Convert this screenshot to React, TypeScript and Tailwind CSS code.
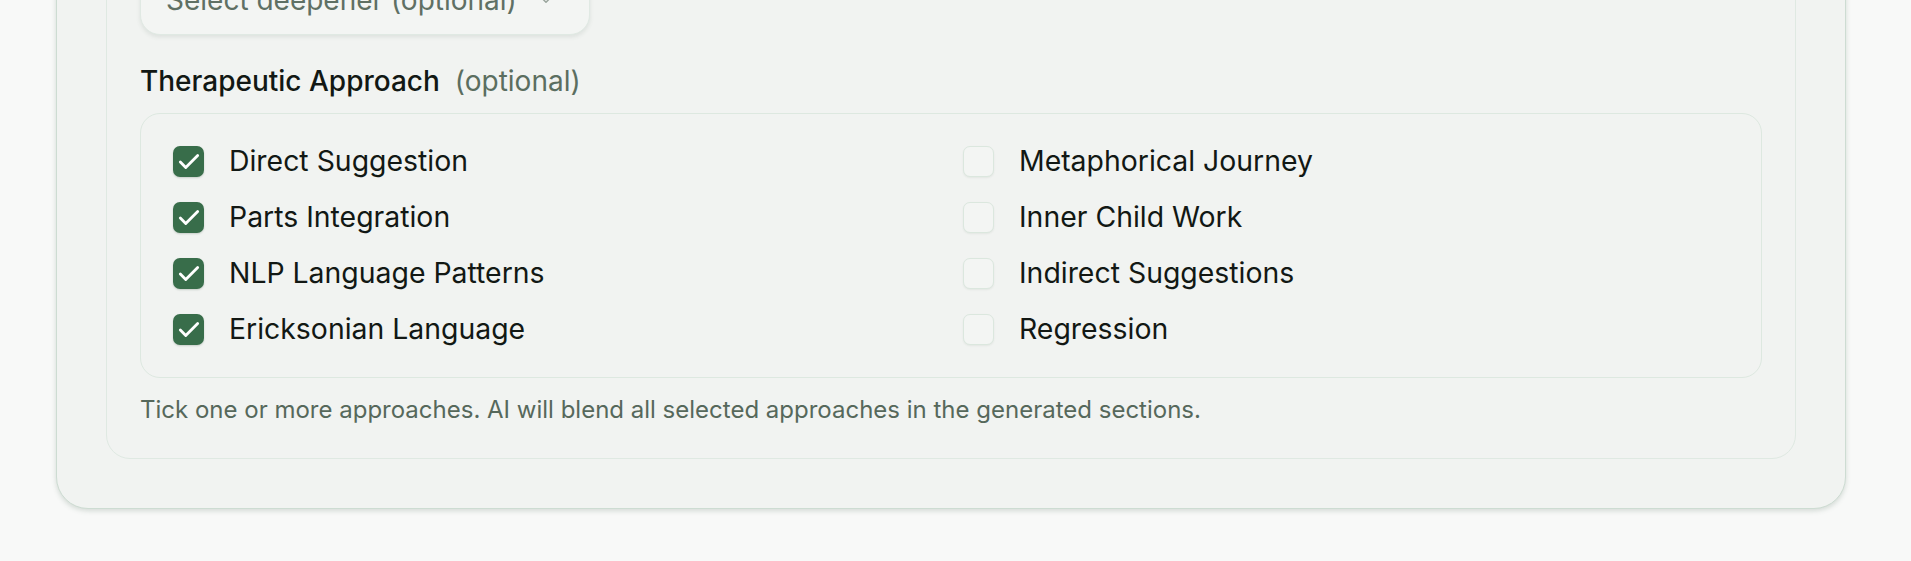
import { Check, ChevronDown } from "lucide-react";

const left = ["Direct Suggestion", "Parts Integration", "NLP Language Patterns", "Ericksonian Language"];
const right = ["Metaphorical Journey", "Inner Child Work", "Indirect Suggestions", "Regression"];

function Item({ label, checked }: { label: string; checked: boolean }) {
  return (
    <label className="flex items-center gap-[25px] h-[31px]">
      {checked ? (
        <span className="w-[31px] h-[31px] rounded-[7px] bg-[#386d4a] flex items-center justify-center shadow-[0_1px_2px_rgba(30,60,40,0.2)]">
          <Check size={26} strokeWidth={2.6} className="text-white" />
        </span>
      ) : (
        <span className="w-[31px] h-[31px] rounded-[7px] border-[1.5px] border-[#dbe7de] bg-[#f3f5f3] shadow-[0_1px_2px_rgba(60,90,70,0.08)]" />
      )}
      <span className="text-[28.4px] leading-none text-[#121814]">{label}</span>
    </label>
  );
}

export default function App() {
  return (
    <div className="h-[561px] overflow-hidden bg-[#f8f9f8]" style={{ fontFamily: "Inter, 'Noto Sans', sans-serif" }}>
      {/* Card */}
      <div className="ml-[56px] w-[1790px] -mt-[120px] rounded-[32px] border border-[#cddcd2] bg-[#f1f3f1] px-[49px] pt-[40px] pb-[49px] shadow-[0_2px_5px_rgba(70,100,80,0.2)]">
        {/* Section */}
        <div className="rounded-[24px] border border-[#dfe9e2] px-[33px] pt-[43px] pb-[31px]">
          {/* Select */}
          <div className="w-[450px] h-[70px] rounded-[20px] border border-[#e0e9e3] bg-[#f3f5f3] shadow-[0_2px_4px_rgba(70,100,80,0.12)] flex items-center justify-between pl-[25px] pr-[34px]">
            <span className="text-[28px] text-[#5f7064]">Select deepener (optional)</span>
            <ChevronDown size={18} className="text-[#9aa59d]" />
          </div>

          {/* Heading */}
          <div className="mt-[28px] h-[36px] flex items-center gap-[15px]">
            <span className="text-[28px] font-medium text-[#121814]">Therapeutic Approach</span>
            <span className="text-[28px] text-[#5b6e60]">(optional)</span>
          </div>

          {/* Options */}
          <div className="mt-[14px] rounded-[20px] border border-[#dde8e0] px-[32px] py-[32px] grid grid-cols-2 gap-x-[24px]">
            <div className="flex flex-col gap-[25px]">
              {left.map((l) => (
                <Item key={l} label={l} checked />
              ))}
            </div>
            <div className="flex flex-col gap-[25px]">
              {right.map((l) => (
                <Item key={l} label={l} checked={false} />
              ))}
            </div>
          </div>

          <p className="mt-[15px] text-[24px] leading-[34px] text-[#56685b]">
            Tick one or more approaches. AI will blend all selected approaches in the generated sections.
          </p>
        </div>
      </div>
    </div>
  );
}
